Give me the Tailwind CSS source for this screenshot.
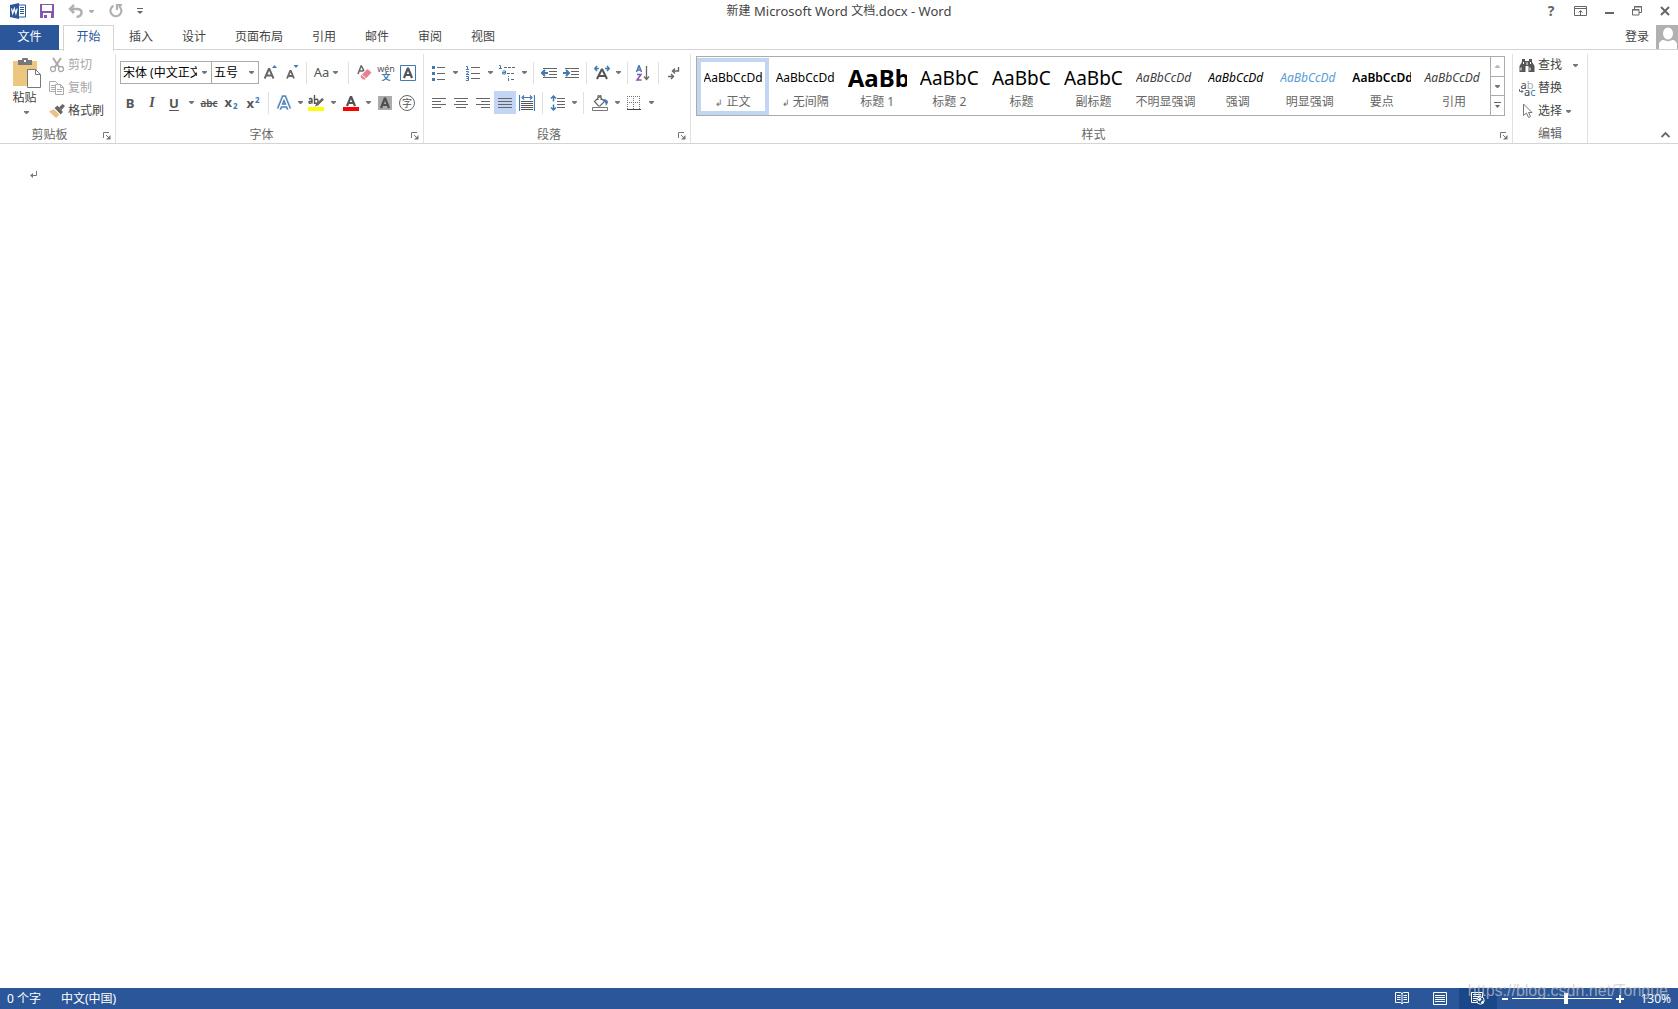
<!DOCTYPE html>
<html lang="zh-CN">
<head>
<meta charset="utf-8">
<title>新建 Microsoft Word 文档.docx - Word</title>
<script src="https://cdn.jsdelivr.net/npm/@tailwindcss/browser@4"></script>
</head>
<body class="flex h-screen flex-col overflow-hidden bg-white font-['Noto_Sans','Noto_Sans_CJK_SC',sans-serif] text-xs leading-4 text-[#444]">
<svg class="hidden">
  <symbol id="dd" viewBox="0 0 5 3"><path d="M0 0h5v1L3 3H2L0 1z" fill="#777"/></symbol>
  <symbol id="launch" viewBox="0 0 8 8"><path d="M.5 6V.5H6" fill="none" stroke="#777"/><path d="M3 3l3 3" stroke="#777"/><path d="M7.500 3v4.500H3z" fill="#777"/></symbol>
</svg>

<header class="grid h-[25px] shrink-0 grid-cols-[1fr_auto_1fr] items-start">
  <div class="flex h-[22px] items-center pl-[10px]">
    <svg class="size-4" viewBox="0 0 16 16"><path d="M8 2h7.500v12H8z" fill="#fff" stroke="#2b579a"/><path d="M10 4.500h4M10 6.500h4M10 8.500h4M10 10.500h4" stroke="#2b579a"/><path d="M0 2l9-2v16l-9-2z" fill="#2b579a"/><path d="M1.500 5.500l1.200 5 1.600-5 1.600 5 1.300-5" fill="none" stroke="#fff" stroke-width="1.200"/></svg>
    <button aria-label="保存" class="ml-[14px]"><svg class="h-[14px] w-[14px]" viewBox="0 0 14 14"><path d="M0 0h14v14H0z" fill="#8656b0"/><path d="M2 1h10v6H2zM3 9h8v5H3z" fill="#fff"/><path d="M4 11h3v3H4z" fill="#8656b0"/></svg></button>
    <button aria-label="撤消" class="ml-[14px]"><svg class="h-[14px] w-4" viewBox="0 0 16 14"><path d="M6 1L2 5l4 4M2.500 5H9c3 0 4.500 1.500 4.500 3.500S12 12.500 8.500 13" fill="none" stroke="#b1b1b1" stroke-width="2.500"/></svg></button>
    <button aria-label="撤消选项" class="ml-[5px]"><svg class="h-[3px] w-[5px] opacity-60"><use href="#dd"/></svg></button>
    <button aria-label="重复" class="ml-[15px]"><svg class="size-[14px]" viewBox="0 0 14 14"><path d="M4.500 1.800A5.500 5.500 0 1 0 10 2.200M8 6V1h5" fill="none" stroke="#b1b1b1" stroke-width="2.200"/></svg></button>
    <button aria-label="自定义快速访问工具栏" class="ml-[14px]"><svg class="h-[7px] w-[6px]" viewBox="0 0 6 7"><path d="M0 .5h6" stroke="#666"/><path d="M0 3h6L3 6z" fill="#666"/></svg></button>
  </div>
  <h1 class="flex h-[22px] items-center whitespace-pre text-[13px] font-normal"><span class="text-xs">新建</span> Microsoft Word <span class="text-xs">文档</span>.docx - Word</h1>
  <div class="flex h-[22px] items-center justify-end gap-[18px] pr-2">
    <button aria-label="帮助" class="w-[10px] text-sm font-bold text-[#666]">?</button>
    <button aria-label="功能区显示选项"><svg class="h-[11px] w-[13px]" viewBox="0 0 13 11"><path d="M.5 .5h12v9H.5zM.5 2.500h12M6.500 9V5M4.500 6.500l2-2 2 2" fill="none" stroke="#666"/></svg></button>
    <button aria-label="最小化"><svg class="h-[11px] w-[9px]" viewBox="0 0 9 11"><path d="M0 7h9" stroke="#666" stroke-width="2"/></svg></button>
    <button aria-label="还原"><svg class="size-[10px]" viewBox="0 0 10 10"><path d="M2.500 3V.5h7v6H7M.5 3.500h6.500v5.500H.5zM2 1h8M0 4h7" fill="none" stroke="#666"/></svg></button>
    <button aria-label="关闭"><svg class="size-[10px]" viewBox="0 0 10 10"><path d="M1 1l8 8M9 1L1 9" stroke="#666" stroke-width="2"/></svg></button>
  </div>
</header>

<nav class="flex h-[25px] shrink-0 items-center border-b border-[#d4d4d4]">
  <button class="h-[25px] w-[59px] shrink-0 bg-[#2b579a] pb-px text-white">文件</button>
  <button class="-mb-px ml-1 mr-[15px] h-[26px] w-[51px] border border-b-0 border-[#d4d4d4] bg-white pb-[3px] text-[#2b579a]">开始</button>
  <div class="flex gap-[29px]">
    <button>插入</button><button>设计</button><button>页面布局</button><button>引用</button><button>邮件</button><button>审阅</button><button>视图</button>
  </div>
  <div class="ml-auto flex h-6 items-center gap-[7px]">
    <a href="#" class="pb-px">登录</a>
    <svg class="h-6 w-[22px]" viewBox="0 0 22 24"><path d="M0 0h22v24H0z" fill="#b1b1b1"/><ellipse cx="12" cy="8.500" rx="5" ry="6" fill="#fff"/><path d="M3 24v-4c0-3 2-5 5-5 2 1.500 6 1.500 8 0 3 0 5 2 5 5v4z" fill="#fff"/></svg>
  </div>
</nav>

<main class="flex h-[94px] shrink-0 border-b border-[#d4d4d4] pt-1">
  <!-- clipboard -->
  <section class="flex w-[116px] shrink-0 flex-col border-r border-[#e1e1e1]">
    <div class="flex flex-1">
      <button class="flex w-[49px] flex-col items-center pt-1">
        <svg class="ml-1 h-[31px] w-7" viewBox="0 0 28 31"><path d="M0 3h24v25H0z" fill="#ecc77f"/><path d="M5 2h4V1q0-1 1-1h4q1 0 1 1v1h4v5H5z" fill="#777"/><path d="M11 2h2v2h-2z" fill="#fff"/><path d="M14.500 11.500h8l5 5v13h-13z" fill="#fff" stroke="#777"/><path d="M22.500 11.500v5h5" fill="none" stroke="#777"/></svg>
        <span class="mt-px">粘贴</span>
        <svg class="ml-1 mt-[5px] h-[3px] w-[5px]"><use href="#dd"/></svg>
      </button>
      <div class="flex flex-col">
        <button class="flex h-[22px] items-center gap-[3px] text-[#a6a6a6]"><svg class="size-4" viewBox="0 0 16 16"><path d="M4 1l6 9M12 1L6 10" stroke="#aaa" stroke-width="2"/><circle cx="4" cy="12" r="2.500" fill="none" stroke="#aaa" stroke-width="1.300"/><circle cx="12" cy="12" r="2.500" fill="none" stroke="#aaa" stroke-width="1.300"/></svg>剪切</button>
        <button class="flex h-6 items-center gap-[3px] text-[#a6a6a6]"><svg class="size-4" viewBox="0 0 16 16"><path d="M.5 1.500h6l2 2v8h-8zM2 5.500h4M2 7.500h4M2 9.500h4" fill="#fff" stroke="#aaa"/><path d="M6.500 4.500h5l3 3v7h-8zM11.500 4.500v3h3M8 9.500h5M8 11.500h5" fill="#fff" stroke="#aaa"/></svg>复制</button>
        <button class="flex h-[22px] items-center gap-[3px]"><svg class="size-4" viewBox="0 0 16 16"><path d="M0 8.500L5 6l5.500 5.500L7 15z" fill="#ecc08a"/><path d="M5.500 5l3-2.500L14 9l-2.500 2.500z" fill="#666"/><path d="M10 4.500L13.500 1 16 3l-3.500 4z" fill="#666"/><path d="M5 5.500l6.500 6.500" stroke="#fff" stroke-width=".8"/></svg>格式刷</button>
      </div>
    </div>
    <div class="flex h-[17px] items-center text-[#666]"><span class="flex-1 text-center">剪贴板</span><button aria-label="剪贴板设置" class="flex w-4 justify-end pr-1 pt-[3px]"><svg class="size-2"><use href="#launch"/></svg></button></div>
  </section>

  <!-- font -->
  <section class="flex w-[308px] shrink-0 flex-col border-r border-[#e1e1e1]">
    <div class="flex flex-1 flex-col pl-[3px] pt-[7px]">
      <div class="flex h-[23px] items-center pl-px">
        <div class="relative"><select aria-label="字体" class="block h-[23px] w-[92px] appearance-none overflow-hidden border border-[#ababab] bg-white pl-[2px] pr-[14px] text-black"><option>宋体 (中文正文)</option></select><svg class="absolute right-[5px] top-[10px] h-[3px] w-[5px]"><use href="#dd"/></svg></div>
        <div class="relative -ml-px"><select aria-label="字号" class="block h-[23px] w-12 appearance-none border border-[#ababab] bg-white pl-[2px] text-black"><option>五号</option></select><svg class="absolute right-[5px] top-[10px] h-[3px] w-[5px]"><use href="#dd"/></svg></div>
        <button aria-label="增大字号" class="flex w-[22px] justify-center"><svg class="size-4" viewBox="0 0 16 16"><path d="M2.700 13.500L6.800 4h.6l4.100 9.500M4.300 10.500h5.600" fill="none" stroke="#666" stroke-width="1.900"/><path d="M10 3l2.500-3L15 3z" fill="#4478b0"/></svg></button>
        <button aria-label="减小字号" class="flex w-[22px] justify-center"><svg class="size-4" viewBox="0 0 16 16"><path d="M3 13.500L6.200 6h.6l3.200 7.500M4.300 11h4.400" fill="none" stroke="#666" stroke-width="1.800"/><path d="M9.500 0l2.500 3L14.500 0z" fill="#4478b0"/></svg></button>
        <i class="mx-[3px] h-[22px] w-px bg-[#e1e1e1]"></i>
        <button aria-label="更改大小写" class="flex h-[22px] w-[34px] items-center justify-center gap-1 pr-[2px] text-[13px] text-[#555]"><span class="pb-px">Aa</span><svg class="h-[3px] w-[5px]"><use href="#dd"/></svg></button>
        <i class="mx-1 h-[22px] w-px bg-[#e1e1e1]"></i>
        <button aria-label="清除所有格式" class="flex w-[22px] justify-center"><svg class="size-4" viewBox="0 0 16 16"><path d="M2 9L5 1h.5l2.500 5M3.500 6h4" fill="none" stroke="#666" stroke-width="1.500"/><path d="M5 10.500L11.500 4l4 3.500L9 14.500H7L4.500 12z" fill="#e88090"/><path d="M5.500 9.500l4.500 4" stroke="#fff"/></svg></button>
        <button aria-label="拼音指南" class="flex w-[22px] flex-col items-center text-[9px] leading-[8px] text-[#555]"><span>wén</span><span class="font-bold text-[#4478b0]">文</span></button>
        <button aria-label="字符边框" class="flex w-[22px] justify-center"><svg class="size-4" viewBox="0 0 16 16"><path d="M.5 .5h15v15H.5z" fill="#fff" stroke="#4478b0"/><path d="M4 13L7.700 3.500h.6L12 13M5 10h6" fill="none" stroke="#555" stroke-width="2.200"/></svg></button>
      </div>
      <div class="mt-[7px] flex h-[23px] items-center text-[13px] text-[#555]">
        <button class="w-[22px] font-bold">B</button>
        <button class="w-[22px] font-['Liberation_Serif',serif] text-sm font-bold italic">I</button>
        <button class="w-[22px] font-bold underline underline-offset-2">U</button>
        <button aria-label="下划线样式" class="flex w-[13px] justify-center"><svg class="h-[3px] w-[5px]"><use href="#dd"/></svg></button>
        <button class="w-[22px] text-[10px] font-semibold line-through">abc</button>
        <button class="flex w-[22px] justify-center gap-px font-bold">x<span class="mt-[7px] text-[8px] leading-[10px] text-[#4478b0]">2</span></button>
        <button class="flex w-[22px] justify-center gap-px font-bold">x<span class="text-[8px] leading-[10px] text-[#4478b0]">2</span></button>
        <i class="mx-1 h-[22px] w-px bg-[#e1e1e1]"></i>
        <button aria-label="文本效果" class="flex w-[22px] justify-center"><svg class="size-4" viewBox="0 0 16 16"><path d="M3 14L7.700 2.500h.6L13 14M5 10.500h6" fill="none" stroke="#b5cfea" stroke-width="5.500"/><path d="M3 14L7.700 2.500h.6L13 14M5 10.500h6" fill="none" stroke="#4478b0" stroke-width="3.800"/><path d="M3 14L7.700 2.500h.6L13 14M5 10.500h6" fill="none" stroke="#fff" stroke-width="1.600"/></svg></button>
        <button aria-label="文本效果选项" class="flex w-[10px] justify-center"><svg class="h-[3px] w-[5px]"><use href="#dd"/></svg></button>
        <button aria-label="突出显示" class="flex w-[22px] justify-center"><svg class="size-4" viewBox="0 0 16 16"><path d="M0 12h16v4H0z" fill="#ff0"/><path d="M1 4q3-1.500 3 1v3.500M4 6Q.5 6 1 7.500T4 7.500M6.500 0v9M6.500 5Q10 3 10 6T6.500 8" fill="none" stroke="#555" stroke-width="1.400"/><path d="M8 9l6-6 2 1.500-6 6-3 1z" fill="#666"/></svg></button>
        <button aria-label="突出显示颜色" class="flex w-[13px] justify-center"><svg class="h-[3px] w-[5px]"><use href="#dd"/></svg></button>
        <button aria-label="字体颜色" class="flex w-[22px] justify-center"><svg class="size-4" viewBox="0 0 16 16"><path d="M0 12h16v4H0z" fill="red"/><path d="M4 11L7.700 2h.6L12 11M5 8h6" fill="none" stroke="#555" stroke-width="2.200"/></svg></button>
        <button aria-label="字体颜色选项" class="flex w-3 justify-center"><svg class="h-[3px] w-[5px]"><use href="#dd"/></svg></button>
        <button aria-label="字符底纹" class="flex w-[22px] justify-center"><svg class="size-[14px]" viewBox="0 0 14 14"><path d="M0 0h14v14H0z" fill="#ababab"/><path d="M3 12L6.700 2.500h.6L11 12M4 9h6" fill="none" stroke="#505050" stroke-width="2.200"/></svg></button>
        <button aria-label="带圈字符" class="flex w-[22px] justify-center"><span class="flex size-4 items-center justify-center rounded-full border border-[#666] text-[10px] leading-3">字</span></button>
      </div>
    </div>
    <div class="flex h-[17px] items-center text-[#666]"><span class="flex-1 text-center">字体</span><button aria-label="字体设置" class="flex w-4 justify-end pr-1 pt-[3px]"><svg class="size-2"><use href="#launch"/></svg></button></div>
  </section>

  <!-- paragraph -->
  <section class="flex w-[267px] shrink-0 flex-col border-r border-[#e1e1e1]">
    <div class="flex flex-1 flex-col pl-1 pt-[7px]">
      <div class="flex h-[23px] items-center">
        <button aria-label="项目符号" class="flex w-[22px] justify-center"><svg class="size-4" viewBox="0 0 16 16"><path d="M1 1h3v3H1zM1 7h3v3H1zM1 13h3v3H1z" fill="#4478b0"/><path d="M6 2.500h8M6 8.500h8M6 14.500h8" stroke="#666"/></svg></button>
        <button aria-label="项目符号选项" class="flex w-[11px] justify-center"><svg class="h-[3px] w-[5px]"><use href="#dd"/></svg></button>
        <button aria-label="编号" class="flex w-6 justify-center"><svg class="size-4" viewBox="0 0 16 16"><path d="M1 1.500h1.500V4M1 4.500h3M1 6.500h2.500v1L1 9.500h3M1 11.500h2.500v4H1M1.500 13.500h2" fill="none" stroke="#4478b0"/><path d="M6 2.500h9M6 8.500h9M6 13.500h9" stroke="#666"/></svg></button>
        <button aria-label="编号选项" class="flex w-[10px] justify-center"><svg class="h-[3px] w-[5px]"><use href="#dd"/></svg></button>
        <button aria-label="多级列表" class="flex w-6 justify-center"><svg class="size-4" viewBox="0 0 16 16"><path d="M0 .5h1.500V3M0 3.500h3M3.500 6h3v3h-3V7.500h3M9.500 11v1M9.500 13v3" fill="none" stroke="#4478b0"/><path d="M5 2.500h11M8 8.500h8M12 14.500h4" stroke="#666" stroke-dasharray="3 1"/></svg></button>
        <button aria-label="多级列表选项" class="flex w-[10px] justify-center"><svg class="h-[3px] w-[5px]"><use href="#dd"/></svg></button>
        <i class="mx-1 h-[22px] w-px bg-[#e1e1e1]"></i>
        <button aria-label="减少缩进量" class="flex w-[22px] justify-center"><svg class="size-4" viewBox="0 0 16 16"><path d="M2 3.500h14M8 6.500h8M8 9.500h8M2 12.500h14" stroke="#666"/><path d="M7 8H1M4 5L1 8l3 3" fill="none" stroke="#4478b0" stroke-width="2"/></svg></button>
        <button aria-label="增加缩进量" class="flex w-[22px] justify-center"><svg class="size-4" viewBox="0 0 16 16"><path d="M2 3.500h14M8 6.500h8M8 9.500h8M2 12.500h14" stroke="#666"/><path d="M0 8h6M3 5l3 3-3 3" fill="none" stroke="#4478b0" stroke-width="2"/></svg></button>
        <i class="mx-1 h-[22px] w-px bg-[#e1e1e1]"></i>
        <button aria-label="中文版式" class="flex w-[22px] justify-center"><svg class="size-4" viewBox="0 0 16 16"><path d="M3 14L7.700 4.500h.6L13 14M5 11h6" fill="none" stroke="#555" stroke-width="2"/><path d="M5 3.500H1M3 1L.8 3.500 3 6M11 3.500h4M13 1l2.200 2.500L13 6" fill="none" stroke="#4478b0" stroke-width="1.600"/></svg></button>
        <button aria-label="中文版式选项" class="flex w-[10px] justify-center"><svg class="h-[3px] w-[5px]"><use href="#dd"/></svg></button>
        <i class="mx-1 h-[22px] w-px bg-[#e1e1e1]"></i>
        <button aria-label="排序" class="flex w-[22px] justify-center"><svg class="size-4" viewBox="0 0 16 16"><path d="M1.500 7L4 .5 6.500 7M2 5h4" fill="none" stroke="#4478b0" stroke-width="1.500"/><path d="M2 9.500h4L2 15h4.500" fill="none" stroke="#8656b0" stroke-width="1.500"/><path d="M11.500 1v13M9 11.500l2.500 3 2.500-3" fill="none" stroke="#666" stroke-width="1.300"/></svg></button>
        <i class="mx-1 h-[22px] w-px bg-[#e1e1e1]"></i>
        <button aria-label="显示编辑标记" class="flex w-[22px] justify-center"><svg class="size-4" viewBox="0 0 16 16"><path d="M12.500 2v4H7M9 3.500L6.500 6 9 8.500M2 11.500h5M5 9l2.500 2.500L5 14" fill="none" stroke="#666" stroke-width="1.400"/></svg></button>
      </div>
      <div class="mt-[7px] flex h-[23px] items-center">
        <button aria-label="左对齐" class="flex w-[22px] justify-center"><svg class="size-[14px]" viewBox="0 0 14 14"><path d="M0 2.500h14M0 5.500h9M0 8.500h14M0 11.500h9" stroke="#666"/></svg></button>
        <button aria-label="居中" class="flex w-[22px] justify-center"><svg class="size-[14px]" viewBox="0 0 14 14"><path d="M0 2.500h14M2 5.500h10M0 8.500h14M2 11.500h10" stroke="#666"/></svg></button>
        <button aria-label="右对齐" class="flex w-[22px] justify-center"><svg class="size-[14px]" viewBox="0 0 14 14"><path d="M0 2.500h14M5 5.500h9M0 8.500h14M5 11.500h9" stroke="#666"/></svg></button>
        <button aria-label="两端对齐" class="flex h-[23px] w-[22px] items-center justify-center bg-[#c2d5f2]"><svg class="size-[14px]" viewBox="0 0 14 14"><path d="M0 2.500h14M0 5.500h14M0 8.500h14M0 11.500h14" stroke="#666"/></svg></button>
        <button aria-label="分散对齐" class="flex w-[22px] justify-center"><svg class="size-4" viewBox="0 0 16 16"><path d="M.5 0v16M15.500 0v16M3 2.500h10M5 .5l-2 2 2 2M11 .5l2 2-2 2" fill="none" stroke="#4478b0" stroke-width="1.200"/><path d="M2 6.500h12M2 8.500h12M2 10.500h12M2 12.500h12M2 14.500h12" stroke="#555"/></svg></button>
        <i class="mx-1 h-[22px] w-px bg-[#e1e1e1]"></i>
        <button aria-label="行距" class="flex w-[22px] justify-center"><svg class="size-4" viewBox="0 0 16 16"><path d="M3.500 1v5.500M1 3.500L3.500 1 6 3.500M3.500 9.500V15M1 12.500L3.500 15 6 12.500" fill="none" stroke="#4478b0" stroke-width="1.500"/><path d="M7 3.500h8M7 6.500h8M7 9.500h8M7 12.500h8" stroke="#666"/></svg></button>
        <button aria-label="行距选项" class="flex w-[10px] justify-center"><svg class="h-[3px] w-[5px]"><use href="#dd"/></svg></button>
        <i class="mx-1 h-[22px] w-px bg-[#e1e1e1]"></i>
        <button aria-label="底纹" class="flex w-6 justify-center"><svg class="size-4" viewBox="0 0 16 16"><path d="M.5 12.500h15v3H.5z" fill="#fff" stroke="#777"/><path d="M2.500 6.500l5-5 5 5-4.500 4.500H6.500zM6 5V1.500q0-1.500 1.500-1.500T9 1.500V5" fill="none" stroke="#666" stroke-width="1.200"/><path d="M11 4q5 0 5 3.500L14 11q0-4-3-7z" fill="#4478b0"/></svg></button>
        <button aria-label="底纹选项" class="flex w-[10px] justify-center"><svg class="h-[3px] w-[5px]"><use href="#dd"/></svg></button>
        <button aria-label="边框" class="flex w-6 justify-center"><svg class="size-[14px]" viewBox="0 0 14 14"><path d="M0 .5h14M0 6.500h14M.5 0v13M6.500 0v13M12.500 0v13" stroke="#777" stroke-dasharray="1 1"/><path d="M0 13.500h14" stroke="#444"/></svg></button>
        <button aria-label="边框选项" class="flex w-[10px] justify-center"><svg class="h-[3px] w-[5px]"><use href="#dd"/></svg></button>
      </div>
    </div>
    <div class="flex h-[17px] items-center text-[#666]"><span class="flex-1 text-center">段落</span><button aria-label="段落设置" class="flex w-4 justify-end pr-1 pt-[3px]"><svg class="size-2"><use href="#launch"/></svg></button></div>
  </section>

  <!-- styles -->
  <section class="flex w-[822px] shrink-0 flex-col border-r border-[#e1e1e1]">
    <div class="flex-1 pl-[5px] pt-[2px]">
      <div class="flex h-[60px] w-[809px] border border-[#ababab] text-[#666]">
        <div class="grid flex-1 grid-cols-11 py-px [&>button]:flex [&>button]:min-w-0 [&>button]:flex-col [&>button]:items-center [&>button]:border-4 [&>button]:border-transparent [&>button]:whitespace-nowrap [&_b]:flex [&_b]:h-8 [&_b]:w-[59px] [&_b]:items-center [&_b]:overflow-hidden [&_b]:text-black">
          <button class="border-[#c2d5f2]!"><b class="font-normal">AaBbCcDd</b><span><span class="text-[9px]">↲</span> 正文</span></button>
          <button><b class="font-normal">AaBbCcDd</b><span><span class="text-[9px]">↲</span> 无间隔</span></button>
          <button><b class="text-2xl font-bold">AaBb</b><span>标题 1</span></button>
          <button><b class="text-[19px] font-normal">AaBbC</b><span>标题 2</span></button>
          <button><b class="text-[19px] font-normal">AaBbC</b><span>标题</span></button>
          <button><b class="text-[19px] font-normal">AaBbC</b><span>副标题</span></button>
          <button><b class="font-normal italic text-[#404040]!">AaBbCcDd</b><span>不明显强调</span></button>
          <button><b class="font-normal italic">AaBbCcDd</b><span>强调</span></button>
          <button><b class="font-normal italic text-[#5b9bd5]!">AaBbCcDd</b><span>明显强调</span></button>
          <button><b class="font-semibold">AaBbCcDd</b><span>要点</span></button>
          <button><b class="font-normal italic text-[#404040]!">AaBbCcDd</b><span>引用</span></button>
        </div>
        <div class="flex w-[14px] flex-col divide-y divide-[#ababab] border-l border-[#ababab]">
          <button aria-label="上一行" class="flex flex-1 items-center justify-center"><svg class="h-[3px] w-[5px] rotate-180 opacity-50"><use href="#dd"/></svg></button>
          <button aria-label="下一行" class="flex flex-1 items-center justify-center"><svg class="h-[3px] w-[5px]"><use href="#dd"/></svg></button>
          <button aria-label="其他" class="flex flex-1 items-center justify-center"><svg class="h-[7px] w-[7px]" viewBox="0 0 7 7"><path d="M0 .5h7" stroke="#666"/><path d="M1 3h5L3.500 6z" fill="#666"/></svg></button>
        </div>
      </div>
    </div>
    <div class="flex h-[17px] items-center"><span class="flex-1 text-center text-[#666]">样式</span><button aria-label="样式设置" class="flex w-4 justify-end pr-1 pt-[3px]"><svg class="size-2"><use href="#launch"/></svg></button></div>
  </section>

  <!-- editing -->
  <section class="flex w-[75px] shrink-0 flex-col border-r border-[#e1e1e1]">
    <div class="flex flex-1 flex-col pl-[6px]">
      <button class="flex h-[22px] items-center gap-[3px]"><svg class="size-4" viewBox="0 0 16 16"><path d="M3 2h3v2h4V2h3v3l2.500 4v6H9.500V9h-3v6H.5V9L3 5z" fill="#555"/><path d="M2 10.500v3M11 10.500v3M8 5v3M4.500 5v2M11.500 5v2" stroke="#fff"/></svg>查找<svg class="ml-2 h-[3px] w-[5px]"><use href="#dd"/></svg></button>
      <button class="flex h-6 items-center gap-[3px]"><span class="flex w-4 flex-col text-[11px] leading-[7px]"><span>a<span class="text-[#aaa]">b</span></span><span class="flex items-center"><svg class="size-[5px] shrink-0" viewBox="0 0 5 5"><path d="M.5 0v2.500H4M2.500 1L4 2.500 2.500 4" fill="none" stroke="#4478b0"/></svg>a<span class="text-[#4478b0]">c</span></span></span>替换</button>
      <button class="flex h-[22px] items-center gap-[3px]"><svg class="size-4" viewBox="0 0 16 16"><path d="M4.500 1v11.500l3-2.500 2 4.500 2-1-2-4h3.500z" fill="#fff" stroke="#777"/></svg>选择<svg class="ml-px h-[3px] w-[5px]"><use href="#dd"/></svg></button>
    </div>
    <div class="h-[17px] text-center text-[#666]">编辑</div>
  </section>
  <button aria-label="折叠功能区" class="ml-auto self-end pb-[5px] pr-2"><svg class="h-[6px] w-[9px]" viewBox="0 0 9 6"><path d="M.5 5l4-4 4 4" fill="none" stroke="#666" stroke-width="1.800"/></svg></button>
</main>

<article class="min-h-0 flex-1 pl-[30px] pt-[26px]">
  <svg class="h-[9px] w-2" viewBox="0 0 8 9"><path d="M6.500 1v4.500H1" fill="none" stroke="#777"/><path d="M0 5.500L3 3v5z" fill="#777"/></svg>
</article>

<footer class="relative flex h-[21px] shrink-0 items-center bg-[#2b579a] pl-[7px] text-white">
  <span>0 个字</span>
  <button class="ml-5">中文(中国)</button>
  <div class="ml-auto flex h-full items-center pr-[7px]">
    <button aria-label="阅读视图" class="flex w-[38px] justify-center"><svg class="h-[13px] w-[14px]" viewBox="0 0 14 13"><path d="M.5 .5h5l1.500 1 1.500-1h5v10h-5L7 12l-1.500-1.500h-5zM7 1v11M2 3.500h3.500M2 5.500h3.500M2 7.500h3.500M8.500 3.500H12M8.500 5.500H12M8.500 7.500H12" fill="none" stroke="#fff"/></svg></button>
    <button aria-label="页面视图" class="flex w-[38px] justify-center"><svg class="h-[13px] w-[14px]" viewBox="0 0 14 13"><path d="M.5 .5h13v12H.5zM2 3.500h10M2 5.500h10M2 7.500h10M2 9.500h10" fill="none" stroke="#fff"/></svg></button>
    <button aria-label="Web 版式视图" class="flex h-full w-[38px] items-center justify-center bg-[#1a4787]"><svg class="h-[13px] w-[14px]" viewBox="0 0 14 13"><path d="M6 10.500H.5V.5h11V5M2 2.500h8M2 4.500h8M2 6.500h4M2 8.500h3" fill="none" stroke="#fff"/><circle cx="9.500" cy="8.500" r="3.700" fill="#1a4787" stroke="#fff"/><path d="M6.500 7.500l3-2 1 2-2 2zM10 10l2.500-2v2L10.500 12z" fill="#fff"/></svg></button>
    <button aria-label="缩小" class="ml-[5px]"><svg class="h-2 w-[6px]" viewBox="0 0 6 8"><path d="M0 4h6" stroke="#fff" stroke-width="2"/></svg></button>
    <input type="range" aria-label="缩放" min="0" max="100" value="54" class="ml-1 h-[11px] w-[100px] appearance-none bg-[linear-gradient(#fff,#fff)] bg-[length:100%_1px] bg-center bg-no-repeat [&::-webkit-slider-thumb]:h-[11px] [&::-webkit-slider-thumb]:w-1 [&::-webkit-slider-thumb]:appearance-none [&::-webkit-slider-thumb]:bg-white">
    <button aria-label="放大" class="ml-1"><svg class="size-2" viewBox="0 0 8 8"><path d="M0 4h8M4 0v8" stroke="#fff" stroke-width="2"/></svg></button>
    <button class="ml-[14px] w-[33px] text-right">130%</button>
  </div>
  <span class="pointer-events-none absolute bottom-[9px] right-[10px] font-['Liberation_Sans',sans-serif] text-base leading-[18px] text-[#c8c8c8]/70">https://blog.csdn.net/Tongue</span>
</footer>
</body>
</html>
